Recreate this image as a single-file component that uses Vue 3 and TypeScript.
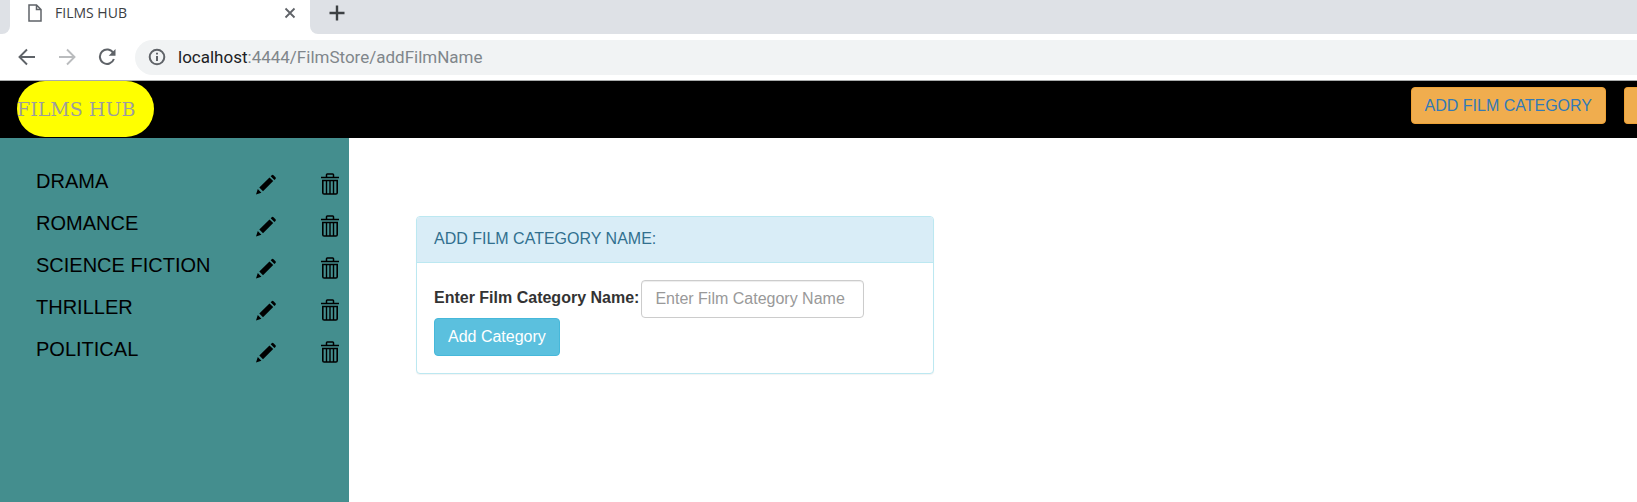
<script setup lang="ts">
import { ref } from 'vue'

const categories = ref<string[]>(['DRAMA', 'ROMANCE', 'SCIENCE FICTION', 'THRILLER', 'POLITICAL'])
const categoryName = ref('')

function addCategory(): void {
  const name = categoryName.value.trim().toUpperCase()
  if (name) categories.value.push(name)
  categoryName.value = ''
}

function removeCategory(index: number): void {
  categories.value.splice(index, 1)
}
</script>

<template>
  <div class="window">
    <div class="tabs">
      <div class="tab-edge"></div>
      <div class="tab">
        <svg class="page-icon" width="14" height="18" viewBox="0 0 14 18" fill="none" stroke="#5f6368" stroke-width="1.5">
          <path d="M1 1h7.5L13 5.500V17H1zM8.500 1v4.500H13" />
        </svg>
        <span class="tab-title">FILMS HUB</span>
        <button class="icon-button" type="button" aria-label="Close tab">
          <svg width="12" height="12" viewBox="0 0 12 12" stroke="#5f6368" stroke-width="1.8"><path d="M1.500 1.500l9 9M10.500 1.500l-9 9" /></svg>
        </button>
      </div>
      <div class="tab-space">
        <button class="icon-button" type="button" aria-label="New tab">
          <svg width="16" height="16" viewBox="0 0 16 16" stroke="#3c4043" stroke-width="2.4"><path d="M8 .5v15M.5 8h15" /></svg>
        </button>
      </div>
    </div>

    <div class="toolbar">
      <button class="icon-button" type="button" aria-label="Back">
        <svg width="18" height="18" viewBox="0 0 18 18" fill="none" stroke="#5f6368" stroke-width="1.9"><path d="M17 9H2M9 1.500L1.500 9 9 16.500" /></svg>
      </button>
      <button class="icon-button" type="button" aria-label="Forward">
        <svg width="18" height="18" viewBox="0 0 18 18" fill="none" stroke="#babcbe" stroke-width="1.9"><path d="M1 9h15M9 1.500L16.500 9 9 16.500" /></svg>
      </button>
      <button class="icon-button" type="button" aria-label="Reload">
        <svg width="18" height="18" viewBox="0 0 18 18"><path d="M15.300 5A7.200 7.200 0 1 0 15.900 11" fill="none" stroke="#5f6368" stroke-width="2" /><path d="M17.500 1v6.800h-6.800z" fill="#5f6368" /></svg>
      </button>
      <div class="address">
        <svg width="18" height="18" viewBox="0 0 18 18" fill="none" stroke="#5f6368" stroke-width="2"><circle cx="9" cy="9" r="7.300" /><path d="M9 8v5M9 4.800v1.800" /></svg>
        <span class="url"><span class="host">localhost</span>:4444/FilmStore/addFilmName</span>
      </div>
    </div>

    <header class="navbar">
      <a class="brand" href="#">FILMS HUB</a>
      <nav class="actions">
        <button class="nav-button" type="button">ADD FILM CATEGORY</button>
        <button class="nav-button cut" type="button"></button>
      </nav>
    </header>

    <div class="body">
      <aside class="sidebar">
        <ul class="list">
          <li v-for="(category, index) in categories" :key="category" class="row">
            <a class="name" href="#">{{ category }}</a>
            <button class="icon-button tool" type="button" aria-label="Edit">
              <svg width="22" height="22" viewBox="0 0 22 22">
                <path d="M1 21.500l1.800-5.400 3.600 3.600zM4.300 14.500L14.500 4.400l3.700 3.700L8 18.200zM15.700 3.200l1-1q.9-.9 1.800 0l2 2q.8.800 0 1.700l-1.100 1z" />
              </svg>
            </button>
            <button class="icon-button tool" type="button" aria-label="Delete" @click="removeCategory(index)">
              <svg width="18" height="22" viewBox="0 0 18 22" fill="none" stroke="#000">
                <path d="M0 4.500h18" stroke-width="1.500" />
                <path d="M5.500 4V1.800q0-.8.800-.8h5.400q.8 0 .8.800V4" stroke-width="1.500" />
                <path d="M1.800 7.500h14.400v12.200q0 1.300-1.300 1.300H3.100q-1.300 0-1.300-1.300z" stroke-width="1.600" />
                <path d="M5.500 7.500V21M9 7.500V21M12.500 7.500V21" stroke-width="1.400" />
              </svg>
            </button>
          </li>
        </ul>
      </aside>

      <main class="content">
        <section class="panel">
          <h1 class="panel-heading">ADD FILM CATEGORY NAME:</h1>
          <form class="panel-body" @submit.prevent="addCategory">
            <div class="field">
              <label for="category-name">Enter Film Category Name:</label>
              <input id="category-name" v-model="categoryName" type="text" placeholder="Enter Film Category Name" />
            </div>
            <button class="submit" type="submit">Add Category</button>
          </form>
        </section>
      </main>
    </div>
  </div>
</template>

<style>
body {
  margin: 0;
  background: #fff;
}
</style>

<style scoped>
* {
  box-sizing: border-box;
}

.window {
  display: flex;
  flex-direction: column;
  min-height: 100vh;
  overflow: hidden;
  color: #333;
  font-family: "Liberation Sans", Arial, sans-serif;
  font-size: 16px;
}

svg {
  display: block;
  flex: none;
}

button,
input {
  font: inherit;
}

.icon-button {
  display: flex;
  padding: 0;
  border: 0;
  background: none;
  cursor: pointer;
}

.tabs {
  display: flex;
  height: 34px;
  background: #fff;
}

.tab-edge {
  width: 10px;
  border-bottom-right-radius: 8px;
  background: #dee1e6;
}

.tab {
  display: flex;
  align-items: center;
  width: 300px;
  padding: 0 14px 8px 18px;
}

.tab-title {
  flex: 1;
  margin-left: 13px;
  color: #3c4043;
  font: 14px/20px "Open Sans", sans-serif;
}

.tab-space {
  display: flex;
  flex: 1;
  align-items: center;
  padding: 0 19px 8px;
  border-bottom-left-radius: 8px;
  background: #dee1e6;
}

.toolbar {
  display: flex;
  align-items: center;
  gap: 22px;
  height: 47px;
  padding-left: 18px;
  border-bottom: 1px solid #a9abac;
}

.address {
  display: flex;
  flex: 1;
  align-items: center;
  gap: 12px;
  height: 35px;
  margin-left: -3px;
  padding-left: 13px;
  border-radius: 18px 0 0 18px;
  background: #f1f3f4;
}

.url {
  color: #80868b;
  font: 17px/24px Roboto, sans-serif;
}

.host {
  color: #202124;
}

.navbar {
  display: flex;
  justify-content: space-between;
  height: 57px;
  padding-left: 17px;
  background: #000;
}

.brand {
  width: 137px;
  height: 56px;
  border-radius: 28px;
  background: #ff0;
  color: #9d9d9d;
  font: 19px/56px "DejaVu Serif", serif;
  text-decoration: none;
}

.actions {
  display: flex;
  gap: 18px;
  padding-top: 6px;
}

.nav-button {
  height: 37px;
  padding: 0 13px;
  border: 1px solid #eea236;
  border-radius: 4px;
  background: #f0ad4e;
  color: #337ab7;
}

.cut {
  width: 13px;
  padding: 0;
  border-right: 0;
  border-radius: 4px 0 0 4px;
}

.body {
  display: flex;
  flex: 1;
}

.sidebar {
  flex: none;
  width: 349px;
  padding: 26px 10px 0 36px;
  background: #448e8e;
}

.list {
  margin: 0;
  padding: 0;
  list-style: none;
}

.row {
  display: grid;
  grid-template-columns: 1fr 22px 18px;
  column-gap: 44px;
  height: 42px;
}

.name {
  color: #000;
  font-size: 20px;
  line-height: 34px;
  text-decoration: none;
  white-space: nowrap;
}

.tool {
  align-items: center;
  height: 40px;
}

.content {
  flex: 1;
  padding: 78px 67px;
}

.panel {
  max-width: 518px;
  border: 1px solid #bce8f1;
  border-radius: 4px;
  background: #fff;
  box-shadow: 0 1px 1px rgba(0, 0, 0, 0.05);
}

.panel-heading {
  margin: 0;
  padding: 10px 17px 12px;
  border-bottom: 1px solid #bce8f1;
  border-radius: 3px 3px 0 0;
  background: #d9edf7;
  color: #31708f;
  font-size: 16px;
  font-weight: 400;
  line-height: 23px;
}

.panel-body {
  padding: 17px;
}

.field {
  display: flex;
  align-items: center;
  gap: 2px;
}

.field label {
  padding-bottom: 2px;
  font-weight: 700;
  white-space: nowrap;
}

.field input {
  width: 223px;
  height: 38px;
  padding: 0 13px;
  border: 1px solid #ccc;
  border-radius: 4px;
  color: #555;
  box-shadow: inset 0 1px 1px rgba(0, 0, 0, 0.075);
}

.field input::placeholder {
  color: #999;
}

.submit {
  display: block;
  height: 38px;
  padding: 0 13px;
  border: 1px solid #46b8da;
  border-radius: 4px;
  background: #5bc0de;
  color: #fff;
}
</style>
